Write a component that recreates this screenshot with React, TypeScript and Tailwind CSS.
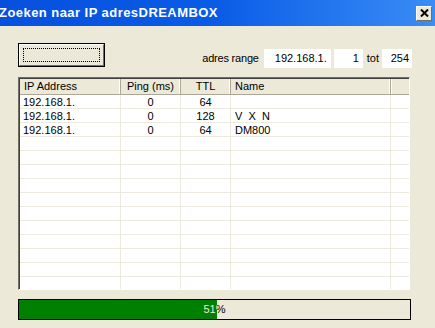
const rows = [
  { ip: "192.168.1.", ping: "0", ttl: "64", name: "" },
  { ip: "192.168.1.", ping: "0", ttl: "128", name: "V  X  N" },
  { ip: "192.168.1.", ping: "0", ttl: "64", name: "DM800" },
];

const emptyRows = Array.from({ length: 12 });

const HeaderCell = ({ label, w, center }: { label: string; w: string; center?: boolean }) => (
  <div
    className={`${w} h-full flex items-center border-r border-r-[#aca899] shadow-[inset_-1px_0_0_#ffffff] ${
      center ? "justify-center" : "pl-[4px]"
    }`}
  >
    {label}
  </div>
);

const App = () => {
  return (
    <div
      className="w-[435px] h-[328px] overflow-hidden bg-[#ece9d8] text-[11px] text-black"
      style={{ fontFamily: '"Liberation Sans", Arial, sans-serif' }}
    >
      {/* title bar */}
      <div className="h-[26px] flex items-center justify-between bg-gradient-to-r from-[#0650de] via-[#0a5ce6] to-[#3a8cf6]">
        <span className="text-white font-bold text-[13px] tracking-[0.45px] -ml-[1px]">
          Zoeken naar IP adresDREAMBOX
        </span>
        <div className="w-[16px] h-[15px] mr-[3px] bg-[#ece9d8] border border-t-white border-l-white border-r-[#716f64] border-b-[#716f64] flex items-center justify-center">
          <svg width="9" height="8" viewBox="0 0 9 8">
            <path d="M1 0.5 L8 7.5 M8 0.5 L1 7.5" stroke="#000" strokeWidth="2" />
          </svg>
        </div>
      </div>

      {/* top controls */}
      <div className="flex items-end pl-[18px] pr-[23px] pt-[17px]">
        <button className="w-[87px] h-[24px] border border-black bg-[#ece9d8] p-0">
          <div className="w-full h-full border border-t-white border-l-white border-r-[#716f64] border-b-[#716f64] p-[3px]">
            <div className="w-full h-full border border-dotted border-black" />
          </div>
        </button>
        <div className="flex-1" />
        <div className="flex items-center h-[19px] mb-[-1px]">
          <span className="mr-[5px] tracking-[-0.2px]">adres range</span>
          <div className="w-[67px] h-[19px] bg-white flex items-center justify-end pr-[4px]">192.168.1.</div>
          <div className="w-[29px] h-[19px] bg-white ml-[3px] flex items-center justify-end pr-[4px]">1</div>
          <span className="ml-[4px] mr-[3px]">tot</span>
          <div className="w-[30px] h-[19px] bg-white flex items-center justify-end pr-[3px]">254</div>
        </div>
      </div>

      {/* list view */}
      <div className="mx-[18px] mt-[10px] w-[392px] h-[213px] overflow-hidden bg-white border border-t-[#716f64] border-l-[#716f64] border-r-white border-b-white">
        <div className="border-t border-l border-t-[#404040] border-l-[#404040] h-full">
          <div className="h-[16px] flex bg-[#ece9d8] border-b border-b-[#aca899]">
            <HeaderCell label="IP Address" w="w-[101px]" />
            <HeaderCell label="Ping (ms)" w="w-[60px]" center />
            <HeaderCell label="TTL" w="w-[50px]" center />
            <HeaderCell label="Name" w="w-[160px]" />
            <div className="flex-1 shadow-[inset_1px_0_0_#ffffff]" />
          </div>
          {rows.map((r, i) => (
            <div key={i} className="h-[14px] flex items-center border-b border-b-[#eceadf]">
              <div className="w-[101px] pl-[3px] border-r border-r-[#eceadf] h-full leading-[14px]">{r.ip}</div>
              <div className="w-[60px] text-center border-r border-r-[#eceadf] h-full leading-[14px]">{r.ping}</div>
              <div className="w-[50px] text-center border-r border-r-[#eceadf] h-full leading-[14px]">{r.ttl}</div>
              <div className="w-[160px] pl-[4px] border-r border-r-[#eceadf] h-full leading-[14px] whitespace-pre">{r.name}</div>
              <div className="flex-1 h-full" />
            </div>
          ))}
          {emptyRows.map((_, i) => (
            <div key={i} className="h-[14px] flex border-b border-b-[#eceadf]">
              <div className="w-[101px] border-r border-r-[#eceadf] h-full" />
              <div className="w-[60px] border-r border-r-[#eceadf] h-full" />
              <div className="w-[50px] border-r border-r-[#eceadf] h-full" />
              <div className="w-[160px] border-r border-r-[#eceadf] h-full" />
              <div className="flex-1 h-full" />
            </div>
          ))}
        </div>
      </div>

      {/* progress */}
      <div className="relative mx-[18px] mt-[9px] w-[393px] h-[21px] border border-black bg-[#ece9d8]">
        <div className="absolute inset-0 flex items-center justify-center">51%</div>
        <div className="absolute left-0 top-0 bottom-0 w-[198px] overflow-hidden bg-[#008000]">
          <div className="w-[391px] h-full flex items-center justify-center text-[#ece9d8]">51%</div>
        </div>
      </div>
    </div>
  );
};

export default App;
